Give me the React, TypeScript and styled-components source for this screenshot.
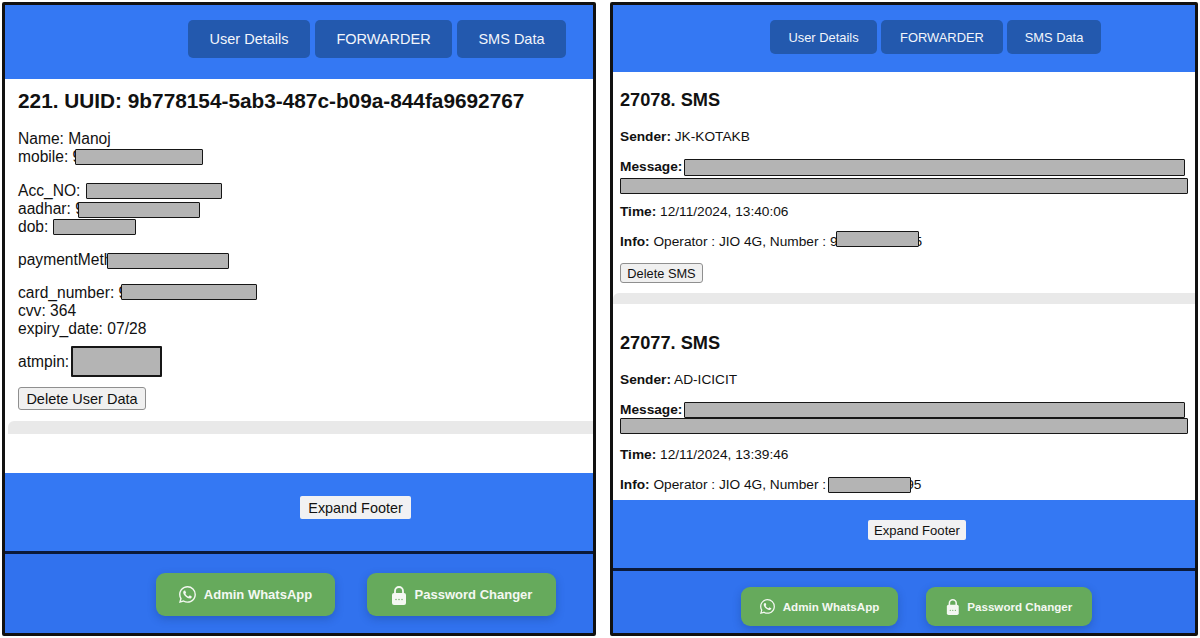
import React from 'react';
import styled, { createGlobalStyle } from 'styled-components';
import { BsWhatsapp } from 'react-icons/bs';

const GlobalStyle = createGlobalStyle`
  html, body {
    margin: 0;
    padding: 0;
    background: #fff;
    font-family: "Liberation Sans", Arial, sans-serif;
    color: #111;
  }
`;

const Stage = styled.div`
  width: 1200px;
  height: 638px;
  box-sizing: border-box;
  padding: 2px;
  display: flex;
  gap: 14px;
  overflow: hidden;
`;

const Panel = styled.section<{ $width: number }>`
  width: ${({ $width }) => $width}px;
  flex: none;
  box-sizing: border-box;
  border: 3px solid #111;
  border-radius: 2px;
  display: flex;
  flex-direction: column;
  overflow: hidden;
`;

const Header = styled.header<{ $height: number; $pad: number; $top: number; $gap: number }>`
  height: ${({ $height }) => $height}px;
  flex: none;
  box-sizing: border-box;
  background: #3478f3;
  display: flex;
  justify-content: flex-end;
  align-items: flex-start;
  gap: ${({ $gap }) => $gap}px;
  padding: ${({ $top }) => $top}px ${({ $pad }) => $pad}px 0 0;
`;

const NavButton = styled.div<{ $width: number; $height: number; $size: number }>`
  width: ${({ $width }) => $width}px;
  height: ${({ $height }) => $height}px;
  display: flex;
  align-items: center;
  justify-content: center;
  border-radius: 5px;
  background: #2359ae;
  color: #f2f5fb;
  font-size: ${({ $size }) => $size}px;
`;

const Content = styled.main`
  flex: 1;
  min-height: 0;
  background: #fff;
  overflow: hidden;
`;

const Card = styled.article<{ $pad: string }>`
  padding: ${({ $pad }) => $pad};
`;

const Title = styled.h2<{ $size: number; $bottom: number }>`
  margin: 0 0 ${({ $bottom }) => $bottom}px;
  font-size: ${({ $size }) => $size}px;
  line-height: 24px;
  font-weight: 700;
  color: #111;
  white-space: nowrap;
`;

const Group = styled.div<{ $bottom: number }>`
  font-size: 15.6px;
  line-height: 18px;
  margin-bottom: ${({ $bottom }) => $bottom}px;
  white-space: nowrap;
`;

const Line = styled.div`
  height: 18px;
`;

const SmsLine = styled.p<{ $top?: number; $bottom: number }>`
  margin: ${({ $top }) => $top ?? 0}px 0 ${({ $bottom }) => $bottom}px;
  font-size: 13.7px;
  line-height: 16px;
  white-space: nowrap;

  b {
    font-weight: 700;
  }
`;

// covers part of a value, so it sits over the text before and after it
const Redact = styled.span<{ $width: number; $height?: number; $overlap?: number; $gapLeft?: number; $lift?: number }>`
  display: inline-block;
  box-sizing: border-box;
  width: ${({ $width }) => $width}px;
  height: ${({ $height }) => $height ?? 16}px;
  margin: -4px 0 -4px ${({ $overlap, $gapLeft }) => ($overlap ? -$overlap : $gapLeft ?? 0)}px;
  vertical-align: middle;
  background: #b4b4b4;
  border: 1.5px solid #161616;
  border-radius: 1px;
  position: relative;
  top: -${({ $lift }) => $lift ?? 0}px;
`;

const Peek = styled.span<{ $overlap: number }>`
  margin-left: -${({ $overlap }) => $overlap}px;
`;

const RedactBlock = styled.div<{ $height: number; $top: number }>`
  box-sizing: border-box;
  height: ${({ $height }) => $height}px;
  margin-top: ${({ $top }) => $top}px;
  background: #b4b4b4;
  border: 1.5px solid #161616;
  border-radius: 1px;
`;

const PinRow = styled.div`
  display: flex;
  align-items: center;
  gap: 2px;
  height: 31px;
  font-size: 15.6px;
  margin-bottom: 10px;
`;

const PinBox = styled.span`
  box-sizing: border-box;
  width: 91px;
  height: 31px;
  background: #b4b4b4;
  border: 2px solid #161616;
  border-radius: 1px;
`;

const ActionButton = styled.button<{ $width: number; $height: number; $size: number }>`
  display: block;
  width: ${({ $width }) => $width}px;
  height: ${({ $height }) => $height}px;
  padding: 0;
  background: #f0f0f0;
  border: 1px solid #8f8f8f;
  border-radius: 3px;
  color: #111;
  font-family: inherit;
  font-size: ${({ $size }) => $size}px;
`;

const Divider = styled.div<{ $height: number; $top: number; $inset: number }>`
  height: ${({ $height }) => $height}px;
  margin: ${({ $top }) => $top}px 0 0 ${({ $inset }) => $inset}px;
  background: #e9e9e9;
  border-radius: 6px 0 0 0;
`;

const ExpandBar = styled.div<{ $height: number; $left: number; $top: number }>`
  height: ${({ $height }) => $height}px;
  flex: none;
  box-sizing: border-box;
  background: #3478f3;
  padding: ${({ $top }) => $top}px 0 0 ${({ $left }) => $left}px;
  border-bottom: 3px solid #0b1a3a;
`;

const ExpandButton = styled.button<{ $width: number; $height: number; $size: number }>`
  display: block;
  width: ${({ $width }) => $width}px;
  height: ${({ $height }) => $height}px;
  padding: 0;
  background: #f1f1f3;
  border: none;
  border-radius: 2px;
  color: #111;
  font-family: inherit;
  font-size: ${({ $size }) => $size}px;
`;

const LinkBar = styled.footer<{ $height: number; $pad: number; $top: number; $gap: number }>`
  height: ${({ $height }) => $height}px;
  flex: none;
  box-sizing: border-box;
  background: #3172ee;
  display: flex;
  justify-content: flex-end;
  align-items: flex-start;
  gap: ${({ $gap }) => $gap}px;
  padding: ${({ $top }) => $top}px ${({ $pad }) => $pad}px 0 0;
`;

const GreenLink = styled.a<{ $width: number; $height: number; $size: number }>`
  width: ${({ $width }) => $width}px;
  height: ${({ $height }) => $height}px;
  display: flex;
  align-items: center;
  justify-content: center;
  gap: 8px;
  border-radius: 9px;
  background: #66aa5c;
  color: #f4f8f2;
  font-size: ${({ $size }) => $size}px;
  font-weight: 700;
  box-shadow: 0 3px 8px rgba(20, 50, 110, 0.3);
`;

const LockIcon = ({ size }: { size: number }) => (
  <svg width={size * 0.8} height={size} viewBox="0 0 16 20" aria-hidden="true">
    <path d="M4 9V6a4 4 0 0 1 8 0v3" fill="none" stroke="#f4f8f2" strokeWidth="1.8" />
    <rect x="1" y="8" width="14" height="12" rx="2" fill="#f4f8f2" />
    <circle cx="5" cy="14.5" r="0.7" fill="#66aa5c" />
    <circle cx="8" cy="14.5" r="0.7" fill="#66aa5c" />
    <circle cx="11" cy="14.5" r="0.7" fill="#66aa5c" />
  </svg>
);

const App: React.FC = () => (
  <>
    <GlobalStyle />
    <Stage>
      <Panel $width={594}>
        <Header $height={74} $pad={27} $top={15} $gap={5}>
          <NavButton $width={122} $height={38} $size={14.5}>User Details</NavButton>
          <NavButton $width={137} $height={38} $size={14.5}>FORWARDER</NavButton>
          <NavButton $width={109} $height={38} $size={14.5}>SMS Data</NavButton>
        </Header>
        <Content>
          <Card $pad="10px 0 0 13px">
            <Title $size={20.8} $bottom={17}>221. UUID: 9b778154-5ab3-487c-b09a-844fa9692767</Title>
            <Group $bottom={16}>
              <Line>Name: Manoj</Line>
              <Line>mobile: 9<Redact $width={128} $overlap={6} $lift={1} /></Line>
            </Group>
            <Group $bottom={15}>
              <Line>Acc_NO: <Redact $width={136} $gapLeft={1} $lift={1} /></Line>
              <Line>aadhar: 9<Redact $width={122} $overlap={6} /></Line>
              <Line>dob: <Redact $width={83} $lift={1} /></Line>
            </Group>
            <Group $bottom={15}>
              <Line>paymentMethod: Net Banking<Redact $width={122} $overlap={116} /></Line>
            </Group>
            <Group $bottom={8}>
              <Line>card_number: 9<Redact $width={136} $overlap={6} $lift={2} /></Line>
              <Line>cvv: 364</Line>
              <Line>expiry_date: 07/28</Line>
            </Group>
            <PinRow>atmpin:<PinBox /></PinRow>
            <ActionButton $width={128} $height={23} $size={14.5}>Delete User Data</ActionButton>
          </Card>
          <Divider $height={13} $top={11} $inset={3} />
        </Content>
        <ExpandBar $height={81} $left={295} $top={23}>
          <ExpandButton $width={111} $height={23} $size={14.4}>Expand Footer</ExpandButton>
        </ExpandBar>
        <LinkBar $height={79} $pad={37} $top={19} $gap={32}>
          <GreenLink $width={179} $height={43} $size={13}>
            <BsWhatsapp size={17} />
            Admin WhatsApp
          </GreenLink>
          <GreenLink $width={189} $height={43} $size={13}>
            <LockIcon size={20} />
            Password Changer
          </GreenLink>
        </LinkBar>
      </Panel>
      <Panel $width={588}>
        <Header $height={67} $pad={94} $top={15} $gap={4}>
          <NavButton $width={107} $height={34} $size={12.9}>User Details</NavButton>
          <NavButton $width={122} $height={34} $size={12.9}>FORWARDER</NavButton>
          <NavButton $width={94} $height={34} $size={12.9}>SMS Data</NavButton>
        </Header>
        <Content>
          <Card $pad="16px 7px 0 7px">
            <Title $size={18.2} $bottom={17}>27078. SMS</Title>
            <SmsLine $bottom={14}><b>Sender:</b> JK-KOTAKB</SmsLine>
            <SmsLine $bottom={0}><b>Message:</b><Redact $width={501} $height={17} $gapLeft={2} /></SmsLine>
            <RedactBlock $height={16} $top={3} />
            <SmsLine $top={10} $bottom={14}><b>Time:</b> 12/11/2024, 13:40:06</SmsLine>
            <SmsLine $bottom={13}><b>Info:</b> Operator : JIO 4G, Number : 9<Redact $width={83} $overlap={2} $lift={3} /><Peek $overlap={4}>5</Peek></SmsLine>
            <ActionButton $width={83} $height={20} $size={12.8}>Delete SMS</ActionButton>
          </Card>
          <Divider $height={11} $top={10} $inset={0} />
          <Card $pad="27px 7px 0 7px">
            <Title $size={18.2} $bottom={17}>27077. SMS</Title>
            <SmsLine $bottom={14}><b>Sender:</b> AD-ICICIT</SmsLine>
            <SmsLine $bottom={0}><b>Message:</b><Redact $width={501} $height={16} $gapLeft={2} /></SmsLine>
            <RedactBlock $height={16} $top={0} />
            <SmsLine $top={13} $bottom={14}><b>Time:</b> 12/11/2024, 13:39:46</SmsLine>
            <SmsLine $bottom={0}><b>Info:</b> Operator : JIO 4G, Number :<Redact $width={83} $gapLeft={2} /><Peek $overlap={5}>95</Peek></SmsLine>
          </Card>
        </Content>
        <ExpandBar $height={71} $left={255} $top={20}>
          <ExpandButton $width={98} $height={20} $size={13.1}>Expand Footer</ExpandButton>
        </ExpandBar>
        <LinkBar $height={62} $pad={103} $top={16} $gap={28}>
          <GreenLink $width={157} $height={39} $size={11.6}>
            <BsWhatsapp size={15} />
            Admin WhatsApp
          </GreenLink>
          <GreenLink $width={166} $height={39} $size={11.6}>
            <LockIcon size={17} />
            Password Changer
          </GreenLink>
        </LinkBar>
      </Panel>
    </Stage>
  </>
);

export default App;
